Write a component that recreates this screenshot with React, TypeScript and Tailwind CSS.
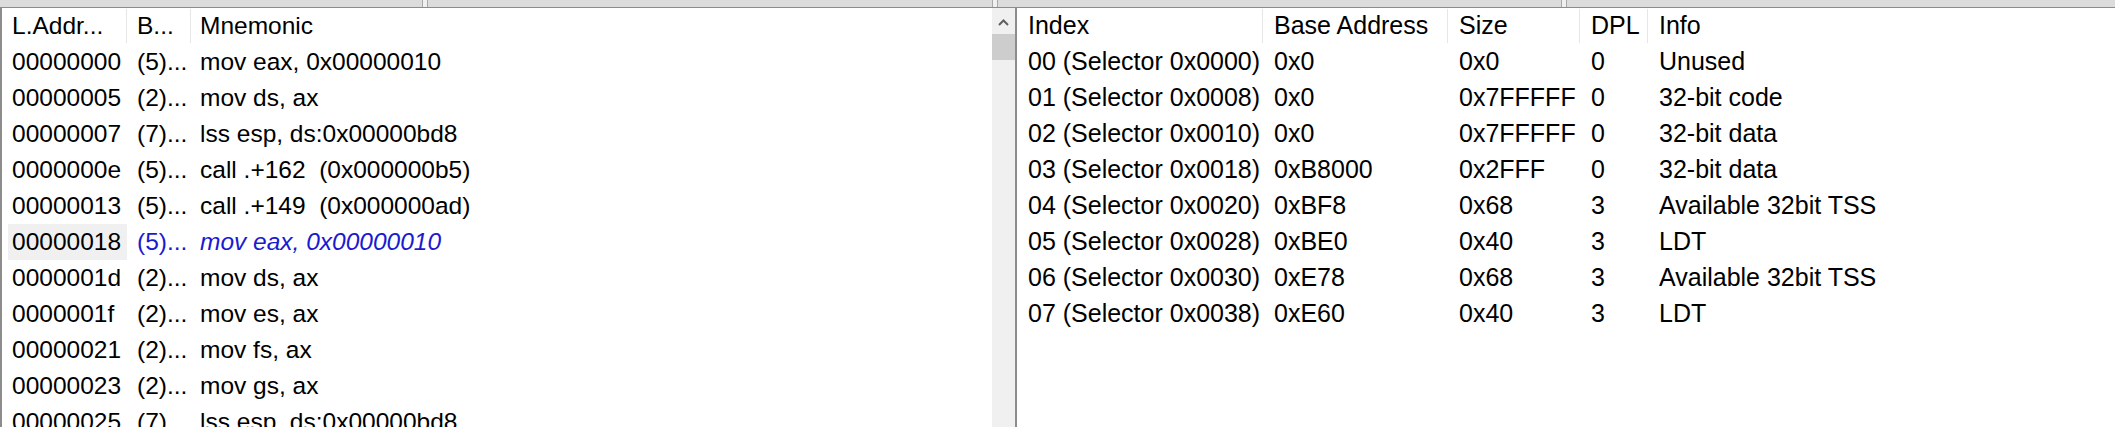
import React from 'react';

const FONT = { fontFamily: '"Liberation Sans", Arial, sans-serif' };

type Asm = { addr: string; bytes: string; text: string; current?: boolean };

const asmRows: Asm[] = [
  { addr: '00000000', bytes: '(5)...', text: 'mov eax, 0x00000010' },
  { addr: '00000005', bytes: '(2)...', text: 'mov ds, ax' },
  { addr: '00000007', bytes: '(7)...', text: 'lss esp, ds:0x00000bd8' },
  { addr: '0000000e', bytes: '(5)...', text: 'call .+162  (0x000000b5)' },
  { addr: '00000013', bytes: '(5)...', text: 'call .+149  (0x000000ad)' },
  { addr: '00000018', bytes: '(5)...', text: 'mov eax, 0x00000010', current: true },
  { addr: '0000001d', bytes: '(2)...', text: 'mov ds, ax' },
  { addr: '0000001f', bytes: '(2)...', text: 'mov es, ax' },
  { addr: '00000021', bytes: '(2)...', text: 'mov fs, ax' },
  { addr: '00000023', bytes: '(2)...', text: 'mov gs, ax' },
  { addr: '00000025', bytes: '(7)...', text: 'lss esp, ds:0x00000bd8' },
];

const gdtRows = [
  ['00 (Selector 0x0000)', '0x0', '0x0', '0', 'Unused'],
  ['01 (Selector 0x0008)', '0x0', '0x7FFFFF', '0', '32-bit code'],
  ['02 (Selector 0x0010)', '0x0', '0x7FFFFF', '0', '32-bit data'],
  ['03 (Selector 0x0018)', '0xB8000', '0x2FFF', '0', '32-bit data'],
  ['04 (Selector 0x0020)', '0xBF8', '0x68', '3', 'Available 32bit TSS'],
  ['05 (Selector 0x0028)', '0xBE0', '0x40', '3', 'LDT'],
  ['06 (Selector 0x0030)', '0xE78', '0x68', '3', 'Available 32bit TSS'],
  ['07 (Selector 0x0038)', '0xE60', '0x40', '3', 'LDT'],
];

// widths of the GDT columns, separators sit on the right edge of each header cell
const gdtCols = ['w-[246px]', 'w-[185px]', 'w-[132px]', 'w-[68px]', 'flex-1'];

function TopStrip() {
  return (
    <div className="flex h-[7px] bg-[#f0f0f0]">
      <div className="w-[423px] bg-[#dcdcdc] border-r border-[#a9a9a9]" />
      <div className="w-[4px]" />
      <div className="w-[566px] bg-[#dcdcdc] border-x border-[#a9a9a9]" />
      <div className="w-[4px]" />
      <div className="w-[565px] bg-[#dcdcdc] border-x border-[#a9a9a9]" />
      <div className="w-[4px]" />
      <div className="flex-1 bg-[#dcdcdc] border-l border-[#a9a9a9]" />
    </div>
  );
}

function Scrollbar() {
  return (
    <div className="w-[23px] shrink-0 bg-[#f0f0f0] flex flex-col">
      <div className="h-[26px] flex items-center justify-center pt-[2px]">
        <svg width="11" height="7" viewBox="0 0 11 7">
          <path d="M1 6 L5.5 1.5 L10 6" fill="none" stroke="#606060" strokeWidth="2" />
        </svg>
      </div>
      <div className="h-[26px] bg-[#cdcdcd]" />
    </div>
  );
}

function Disassembly() {
  return (
    <div className="w-[1015px] shrink-0 flex border-l-2 border-t border-[#8c8c8c] bg-white text-[24.5px]">
      <div className="flex-1 pl-[6px]">
        <div className="flex h-[36px] items-center">
          <div className="w-[119px] h-[34px] flex items-center pl-[4px] border-r border-[#e6e6e6]">L.Addr...</div>
          <div className="w-[64px] h-[34px] flex items-center pl-[10px] border-r border-[#e6e6e6]">B...</div>
          <div className="pl-[9px]">Mnemonic</div>
        </div>
        {asmRows.map((r) => (
          <div key={r.addr} className="flex h-[36px] items-center">
            <div className={`w-[119px] h-full flex items-center pl-[4px] ${r.current ? 'bg-[#f0f0f0]' : ''}`}>{r.addr}</div>
            <div className={`w-[64px] pl-[10px] whitespace-nowrap ${r.current ? 'text-[#1a1ad0]' : ''}`}>{r.bytes}</div>
            <div className={`pl-[9px] whitespace-pre ${r.current ? 'text-[#1a1ad0] italic' : ''}`}>{r.text}</div>
          </div>
        ))}
      </div>
      <Scrollbar />
    </div>
  );
}

function GdtView() {
  return (
    <div className="flex-1 border-l-2 border-t border-[#8c8c8c] bg-white text-[25px]">
      <div className="flex h-[36px] items-center">
        {['Index', 'Base Address', 'Size', 'DPL', 'Info'].map((h, i) => (
          <div
            key={h}
            className={`${gdtCols[i]} h-[34px] flex items-center pl-[11px] whitespace-nowrap ${i < 4 ? 'border-r border-[#e6e6e6]' : ''}`}
          >
            {h}
          </div>
        ))}
      </div>
      {gdtRows.map((row) => (
        <div key={row[0]} className="flex h-[36px] items-center">
          {row.map((c, i) => (
            <div key={i} className={`${gdtCols[i]} pl-[11px] whitespace-nowrap`}>{c}</div>
          ))}
        </div>
      ))}
    </div>
  );
}

export default function App() {
  return (
    <div className="w-[2115px] h-[427px] overflow-hidden bg-white text-black" style={FONT}>
      <TopStrip />
      <div className="flex h-[420px]">
        <Disassembly />
        <GdtView />
      </div>
    </div>
  );
}
